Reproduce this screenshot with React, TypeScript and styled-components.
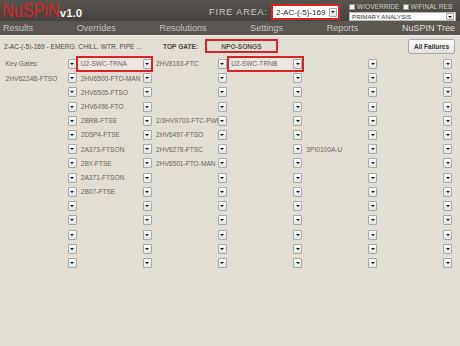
import React from 'react';
import styled, { createGlobalStyle, css } from 'styled-components';

const Global = createGlobalStyle`
  html, body { margin: 0; padding: 0; background: #e3ded3; }
  body {
    font-family: "Liberation Sans", Arial, sans-serif;
    width: 460px;
    height: 346px;
    overflow: hidden;
  }
  * { box-sizing: border-box; }
`;

const Page = styled.div`
  width: 460px;
  height: 346px;
  background: #e3ded3;
`;

const Header = styled.header`
  height: 21px;
  display: flex;
  align-items: flex-start;
  background: linear-gradient(#57544f, #46433f);
  padding: 0 4px 0 2px;
`;

const Brand = styled.div`
  flex: 1;
  display: flex;
  align-items: baseline;
  height: 21px;
`;

const Logo = styled.span`
  display: inline-block;
  color: #de2327;
  font-size: 19.5px;
  line-height: 20px;
  transform: scaleX(0.83);
  transform-origin: left center;
  margin-right: -11.5px;
`;

const Version = styled.span`
  color: #f3f3f3;
  font-weight: 700;
  font-size: 11.5px;
`;

const FireLabel = styled.span`
  color: #cdc9c1;
  font-size: 9px;
  letter-spacing: 0.95px;
  line-height: 10px;
  margin-top: 7px;
  margin-right: 3px;
`;

const FireSelect = styled.div`
  width: 69px;
  height: 16px;
  margin-top: 4px;
  border: 2px solid #d5252a;
  background: #ffffff;
  display: flex;
  align-items: center;
  padding-left: 3px;
  font-size: 8px;
  color: #1e1e1e;
`;

const SelectText = styled.span`
  flex: 1;
  white-space: nowrap;
  overflow: hidden;
`;

const Options = styled.div`
  width: 107px;
  margin-left: 9px;
  margin-top: 3px;
  display: flex;
  flex-direction: column;
`;

const CheckRow = styled.div`
  display: flex;
  height: 8px;
  align-items: center;
`;

const CheckGroup = styled.label`
  display: flex;
  align-items: center;
  gap: 2px;
  width: 56px;
  color: #d2cec6;
  font-size: 6.6px;
  line-height: 8px;
  white-space: nowrap;
`;

const CheckBox = styled.span`
  width: 6px;
  height: 6px;
  background: #f4f4f4;
  border: 1px solid #9c9890;
  flex: none;
`;

const PrimarySelect = styled.div`
  margin-top: 1px;
  height: 9px;
  background: #ffffff;
  border: 1px solid #bdb9b1;
  display: flex;
  align-items: center;
  padding-left: 2px;
  font-size: 6.2px;
  color: #2e2e2e;
`;

const Nav = styled.nav`
  height: 15px;
  display: flex;
  justify-content: space-between;
  align-items: center;
  padding: 0 5px 0 3px;
  background: #5a5753;
  border-bottom: 1px solid #f0ede6;
`;

const NavItem = styled.span<{ $active?: boolean }>`
  font-size: 9px;
  color: ${(p) => (p.$active ? '#e2dfd9' : '#c6c2ba')};
  line-height: 14px;
`;

const Info = styled.div`
  height: 20.5px;
  display: flex;
  align-items: center;
  padding: 0 5px 0 4px;
`;

const Title = styled.span`
  width: 159px;
  flex: none;
  font-size: 6.6px;
  color: #4f4a43;
  white-space: nowrap;
  overflow: hidden;
`;

const TopGateLabel = styled.span`
  width: 42px;
  flex: none;
  font-size: 6.6px;
  font-weight: 700;
  color: #4c4741;
  white-space: nowrap;
`;

const TopGateBox = styled.div`
  width: 73px;
  height: 14px;
  border: 2px solid #d5252a;
  display: flex;
  align-items: center;
  justify-content: center;
  font-size: 6.6px;
  font-weight: 700;
  color: #57524a;
`;

const Spacer = styled.div`
  flex: 1;
`;

const ActionButton = styled.button`
  width: 47px;
  height: 15px;
  padding: 0;
  border: 1px solid #a9a7a2;
  border-radius: 2px;
  background: linear-gradient(#fefefe, #e2e1de);
  font-family: inherit;
  font-size: 6.5px;
  font-weight: 700;
  color: #333;
`;

const Grid = styled.div`
  display: grid;
  grid-template-columns: repeat(6, 75.2px);
  grid-template-rows: 14.5px;
  grid-auto-rows: 14.23px;
  padding-left: 2px;
`;

const Cell = styled.div<{ $selected?: boolean }>`
  display: flex;
  align-items: center;
  min-width: 0;
  ${(p) =>
    p.$selected &&
    css`
      background: #ebe7df;
      outline: 2px solid #d5252a;
      outline-offset: -1px;
    `}
`;

const CellText = styled.span`
  flex: 1;
  min-width: 0;
  padding-left: 3.6px;
  font-size: 6.6px;
  color: #6a655c;
  white-space: nowrap;
  overflow: hidden;
`;

const DropButton = styled.span<{ $w?: number; $h?: number }>`
  flex: none;
  width: ${(p) => p.$w ?? 9}px;
  height: ${(p) => p.$h ?? 10}px;
  margin-right: 0.7px;
  border: 1px solid #a8a8a8;
  border-radius: 1px;
  background: linear-gradient(#fdfdfd, #e3e3e3);
  display: flex;
  align-items: center;
  justify-content: center;
  &::after {
    content: '';
    width: 0;
    height: 0;
    border-left: 2px solid transparent;
    border-right: 2px solid transparent;
    border-top: 2.5px solid #111;
  }
`;

type Row = string[];

const rows: Row[] = [
  ['Key Gates:', 'U2-SWC-TRNA', '2HV8163-FTC', 'U2-SWC-TRNB', '', ''],
  ['2HV6224B-FTSO', '2HV6500-FTO-MAN', '', '', '', ''],
  ['', '2HV6505-FTSO', '', '', '', ''],
  ['', '2HV6496-FTO', '', '', '', ''],
  ['', '2BRB-FTSE', '2/3HV9703-FTC-PWR', '', '', ''],
  ['', '2D5P4-FTSE', '2HV6497-FTSO', '', '', ''],
  ['', '2A373-FTSON', '2HV6278-FTSC', '', '3PI0100A-U', ''],
  ['', '2BY-FTSE', '2HV6501-FTO-MAN', '', '', ''],
  ['', '2A371-FTSON', '', '', '', ''],
  ['', '2B07-FTSE', '', '', '', ''],
  ['', '', '', '', '', ''],
  ['', '', '', '', '', ''],
  ['', '', '', '', '', ''],
  ['', '', '', '', '', ''],
  ['', '', '', '', '', ''],
];

const selected = new Set(['0-1', '0-3']);

const navItems = ['Results', 'Overrides', 'Resolutions', 'Settings', 'Reports', 'NuSPIN Tree'];

export default function App() {
  return (
    <Page>
      <Global />
      <Header>
        <Brand>
          <Logo>NuSPiN</Logo>
          <Version>v1.0</Version>
        </Brand>
        <FireLabel>FIRE AREA:</FireLabel>
        <FireSelect>
          <SelectText>2-AC-(-5)-169</SelectText>
          <DropButton $w={8} $h={9} />
        </FireSelect>
        <Options>
          <CheckRow>
            <CheckGroup>
              <CheckBox />
              W/OVERRIDE
            </CheckGroup>
            <CheckGroup>
              <CheckBox />
              W/FINAL RES
            </CheckGroup>
          </CheckRow>
          <PrimarySelect>
            <SelectText>PRIMARY ANALYSIS</SelectText>
            <DropButton $w={8} $h={7} />
          </PrimarySelect>
        </Options>
      </Header>
      <Nav>
        {navItems.map((n, i) => (
          <NavItem key={n} $active={i === navItems.length - 1}>
            {n}
          </NavItem>
        ))}
      </Nav>
      <Info>
        <Title>2-AC-(-5)-169 - EMERG. CHILL. WTR. PIPE ...</Title>
        <TopGateLabel>TOP GATE:</TopGateLabel>
        <TopGateBox>NPO-SONGS</TopGateBox>
        <Spacer />
        <ActionButton>All Failures</ActionButton>
      </Info>
      <Grid>
        {rows.map((r, ri) =>
          r.map((c, ci) => (
            <Cell key={`${ri}-${ci}`} $selected={selected.has(`${ri}-${ci}`)}>
              <CellText>{c}</CellText>
              <DropButton />
            </Cell>
          ))
        )}
      </Grid>
    </Page>
  );
}
